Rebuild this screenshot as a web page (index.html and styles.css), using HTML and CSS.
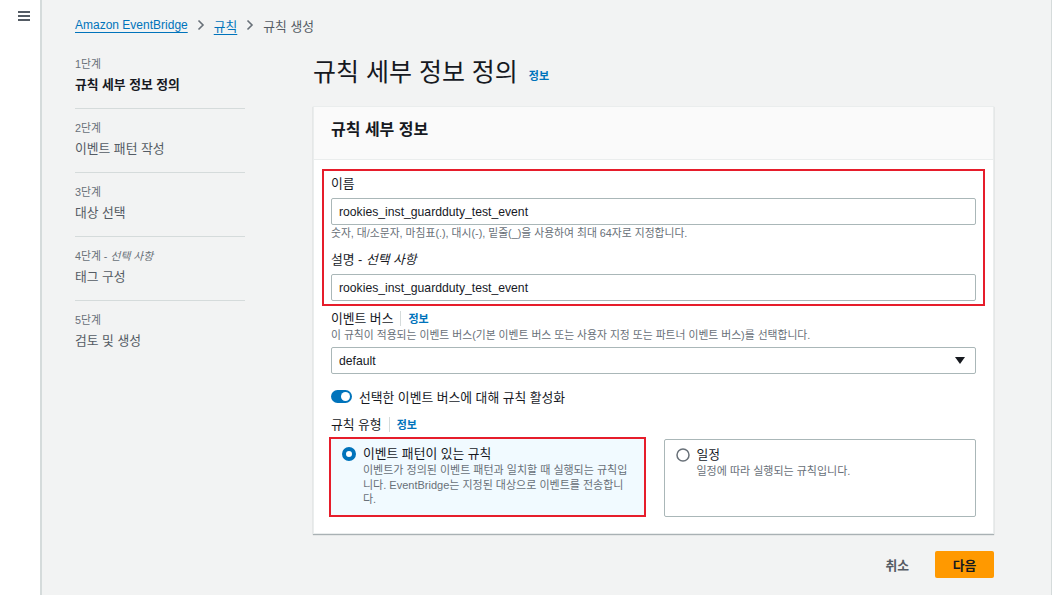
FILE: index.html
```html
<!DOCTYPE html>
<html lang="ko">
<head>
<meta charset="utf-8">
<title>규칙 생성</title>
<link rel="stylesheet" href="styles.css">
</head>
<body>
<div class="app">
  <aside class="rail">
    <button class="menu" aria-label="메뉴">
      <svg width="12" height="10" viewBox="0 0 12 10"><rect y="0" width="12" height="2" fill="#545b64"/><rect y="4" width="12" height="2" fill="#545b64"/><rect y="8" width="12" height="2" fill="#545b64"/></svg>
    </button>
  </aside>
  <main class="main">
    <nav class="crumbs">
      <a class="crumb-link" href="#">Amazon EventBridge</a>
      <svg class="chev" width="8" height="12" viewBox="0 0 8 12"><path d="M1.5 1.5 L6 6 L1.5 10.5" fill="none" stroke="#687078" stroke-width="1.6"/></svg>
      <a class="crumb-link ko" href="#">규칙</a>
      <svg class="chev" width="8" height="12" viewBox="0 0 8 12"><path d="M1.5 1.5 L6 6 L1.5 10.5" fill="none" stroke="#687078" stroke-width="1.6"/></svg>
      <span class="crumb-cur ko">규칙 생성</span>
    </nav>
    <div class="layout">
      <ol class="steps">
        <li class="step current"><div class="step-num">1단계</div><div class="step-name">규칙 세부 정보 정의</div></li>
        <li class="step"><div class="step-num">2단계</div><div class="step-name">이벤트 패턴 작성</div></li>
        <li class="step"><div class="step-num">3단계</div><div class="step-name">대상 선택</div></li>
        <li class="step"><div class="step-num">4단계 - <i>선택 사항</i></div><div class="step-name">태그 구성</div></li>
        <li class="step"><div class="step-num">5단계</div><div class="step-name">검토 및 생성</div></li>
      </ol>
      <section class="content">
        <h1 class="title">규칙 세부 정보 정의 <a class="info" href="#">정보</a></h1>
        <div class="panel">
          <div class="panel-head">규칙 세부 정보</div>
          <div class="panel-body">
            <div class="highlight">
              <div class="field">
                <label class="label">이름</label>
                <div class="input">rookies_inst_guardduty_test_event</div>
                <div class="hint">숫자, 대/소문자, 마침표(.), 대시(-), 밑줄(_)을 사용하여 최대 64자로 지정합니다.</div>
              </div>
              <div class="field second">
                <label class="label">설명 - <i>선택 사항</i></label>
                <div class="input">rookies_inst_guardduty_test_event</div>
              </div>
            </div>
            <div class="field bus">
              <div class="label">이벤트 버스<span class="sep"></span><a class="info" href="#">정보</a></div>
              <div class="desc">이 규칙이 적용되는 이벤트 버스(기본 이벤트 버스 또는 사용자 지정 또는 파트너 이벤트 버스)를 선택합니다.</div>
              <div class="input select">default
                <svg width="10" height="7" viewBox="0 0 10 7"><path d="M0 0 H10 L5 7 Z" fill="#16191f"/></svg>
              </div>
            </div>
            <div class="toggle-row">
              <span class="toggle"><span class="knob"></span></span>
              <span>선택한 이벤트 버스에 대해 규칙 활성화</span>
            </div>
            <div class="label type-label">규칙 유형<span class="sep"></span><a class="info" href="#">정보</a></div>
            <div class="cards">
              <div class="card selected">
                <svg class="radio" width="14" height="14" viewBox="0 0 14 14"><circle cx="7" cy="7" r="5" fill="#fff" stroke="#0073bb" stroke-width="4"/></svg>
                <div>
                  <div class="card-title">이벤트 패턴이 있는 규칙</div>
                  <div class="card-desc">이벤트가 정의된 이벤트 패턴과 일치할 때 실행되는 규칙입니다. EventBridge는 지정된 대상으로 이벤트를 전송합니다.</div>
                </div>
              </div>
              <div class="card">
                <svg class="radio" width="14" height="14" viewBox="0 0 14 14"><circle cx="7" cy="7" r="6" fill="#fff" stroke="#687078" stroke-width="1.5"/></svg>
                <div>
                  <div class="card-title">일정</div>
                  <div class="card-desc">일정에 따라 실행되는 규칙입니다.</div>
                </div>
              </div>
            </div>
          </div>
        </div>
        <div class="actions">
          <button class="btn-link">취소</button>
          <button class="btn-primary">다음</button>
        </div>
      </section>
    </div>
  </main>
</div>
</body>
</html>
```
FILE: styles.css
```css
* { box-sizing: border-box; }
html, body { margin: 0; padding: 0; }
body {
  font-family: "Liberation Sans", "Noto Sans CJK KR", sans-serif;
  color: #16191f;
  background: #fff;
  font-size: 12px;
}
a { text-decoration: none; color: #0073bb; }

.app { display: flex; min-height: 595px; }

.rail {
  width: 42px;
  flex: none;
  background: #fff;
  border-right: 2px solid #d5dbdb;
}
.menu {
  display: block;
  margin: 11px 0 0 18px;
  padding: 0;
  border: 0;
  background: none;
  line-height: 0;
}

.main {
  flex: 1;
  background: #f2f3f3;
  border-right: 1px solid #d5dbdb;
  margin-right: 2px;
  padding: 16px 56px 0 33px;
}

.crumbs {
  display: flex;
  align-items: center;
  height: 18px;
  font-size: 12px;
}
.crumbs .ko { font-size: 12.8px; }
.crumb-link {
  color: #0073bb;
  text-decoration: underline;
  text-underline-offset: 3px;
}
.chev { margin: 0 9px 0 9px; }
.crumb-cur { color: #545b64; }

.layout {
  display: grid;
  grid-template-columns: 170px 681px;
  column-gap: 68px;
  margin-top: 12px;
}

.steps { list-style: none; margin: 0; padding: 0; }
.step {
  padding: 12px 0 12px;
  border-top: 1px solid #d5dbdb;
}
.step:first-child { border-top: 0; padding-top: 11px; }
.step-num {
  font-size: 10.8px;
  line-height: 14px;
  color: #687078;
}
.step-name {
  margin-top: 3px;
  font-size: 12.8px;
  line-height: 22px;
  color: #545b64;
}
.step.current .step-name { color: #16191f; font-weight: bold; }

.content { min-width: 0; }
.title {
  margin: 10px 0 14px;
  font-size: 25px;
  line-height: 32px;
  font-weight: normal;
  color: #16191f;
}
.title .info { font-size: 11px; vertical-align: 1px; margin-left: 4px; }
.info { font-weight: bold; font-size: 11px; color: #0073bb; }

.panel {
  background: #fff;
  border: 1px solid #eaeded;
  box-shadow: 0 1px 1px 0 rgba(0, 28, 36, 0.3);
}
.panel-head {
  background: #fafafa;
  border-bottom: 1px solid #eaeded;
  padding: 13px 17px 19px;
  font-size: 16px;
  line-height: 20px;
  font-weight: bold;
}
.panel-body { padding: 9px 17px 16px; }

.highlight {
  border: 2px solid #e61d2b;
  margin: 0 -9px;
  padding: 4px 7px 3px;
}

.label {
  display: block;
  font-size: 12.8px;
  line-height: 18px;
  color: #16191f;
}
.sep {
  display: inline-block;
  width: 1px;
  height: 15px;
  background: #d5dbdb;
  margin: 0 7px 0 7px;
  vertical-align: -3px;
}
.input {
  margin-top: 5px;
  height: 27px;
  border: 1px solid #aab7b8;
  border-radius: 2px;
  padding: 0 7px;
  display: flex;
  align-items: center;
  font-size: 12.2px;
  color: #16191f;
  background: #fff;
}
.hint {
  margin-top: 1px;
  font-size: 10.8px;
  line-height: 15px;
  color: #687078;
}
.field.second { margin-top: 10px; }

.bus { margin-top: 4px; }
.desc {
  font-size: 10.8px;
  line-height: 15px;
  color: #687078;
  margin-top: 0;
}
.input.select { margin-top: 4px; justify-content: space-between; padding-right: 10px; }

.toggle-row {
  display: flex;
  align-items: center;
  gap: 7px;
  margin-top: 12px;
  height: 20px;
  font-size: 12.8px;
}
.toggle {
  width: 21px;
  height: 13px;
  border-radius: 7px;
  background: #0073bb;
  display: flex;
  align-items: center;
  justify-content: flex-end;
  padding: 0 2px;
}
.knob { width: 9px; height: 9px; border-radius: 50%; background: #fff; }

.type-label { margin-top: 10px; }

.cards {
  display: grid;
  grid-template-columns: 1fr 1fr;
  column-gap: 20px;
  margin-top: 5px;
}
.card {
  display: flex;
  align-items: flex-start;
  gap: 7px;
  border: 1px solid #aab7b8;
  border-radius: 2px;
  padding: 7px 12px 8px 11px;
}
.card.selected {
  border: 2px solid #e61d2b;
  border-radius: 0;
  margin: -2px -2px 0;
  background: #f1faff;
  padding: 7px 11px 8px 11px;
}
.radio { flex: none; margin-top: 1px; }
.card-title { font-size: 12.8px; line-height: 16px; }
.card-desc {
  font-size: 11px;
  line-height: 14.5px;
  color: #687078;
  margin-top: 1px;
}

.actions {
  display: flex;
  justify-content: flex-end;
  align-items: center;
  gap: 26px;
  margin-top: 17px;
}
.btn-link {
  border: 0;
  background: none;
  font: inherit;
  font-size: 12.8px;
  font-weight: bold;
  color: #545b64;
  padding: 0;
}
.btn-primary {
  border: 0;
  border-radius: 2px;
  background: #ff9900;
  color: #16191f;
  font: inherit;
  font-size: 12.8px;
  font-weight: bold;
  width: 59px;
  height: 27px;
  padding: 0;
}
```
